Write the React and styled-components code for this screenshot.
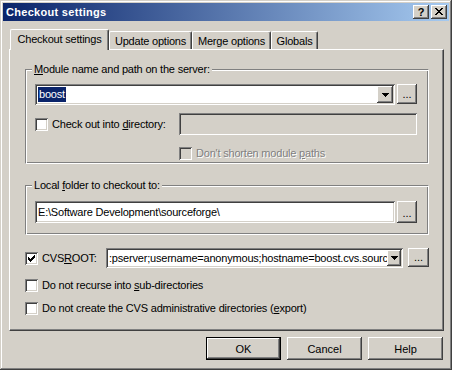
import React from "react";
import styled, { createGlobalStyle } from "styled-components";

const FACE = "#D4D0C8";
const SHADOW = "#808080";
const DARK = "#404040";
const LIGHT = "#FFFFFF";
const NAVY = "#0A246A";

const GlobalStyle = createGlobalStyle`
  html, body { margin: 0; padding: 0; background: ${FACE}; }
  body { font-family: "Liberation Sans", Arial, sans-serif; font-size: 11px; color: #000; }
  *, *::before, *::after { box-sizing: border-box; }
`;

const raisedShadow = `inset -1px -1px ${DARK}, inset 1px 1px ${LIGHT}, inset -2px -2px ${SHADOW}, inset 2px 2px ${FACE}`;
const sunkenShadow = `inset 1px 1px ${SHADOW}, inset -1px -1px ${LIGHT}, inset 2px 2px ${DARK}, inset -2px -2px ${FACE}`;

const Window = styled.div`
  width: 452px;
  height: 370px;
  padding: 3px;
  background: ${FACE};
  box-shadow: inset -1px -1px ${DARK}, inset 1px 1px ${FACE}, inset -2px -2px ${SHADOW}, inset 2px 2px ${LIGHT};
  display: flex;
  flex-direction: column;
  font-family: "Liberation Sans", Arial, sans-serif;
  font-size: 11px;
  letter-spacing: -0.2px;
  overflow: hidden;
`;

const TitleBar = styled.div`
  height: 18px;
  flex: none;
  display: flex;
  align-items: center;
  padding: 0 2px 0 3px;
  background: linear-gradient(to right, ${NAVY}, #a6caf0);
`;

const TitleText = styled.div`
  flex: 1;
  color: #fff;
  font-weight: bold;
  letter-spacing: 0.3px;
  line-height: 18px;
`;

const CaptionButtons = styled.div`
  display: flex;
  gap: 2px;
`;

const CaptionButton = styled.div`
  width: 16px;
  height: 14px;
  background: ${FACE};
  box-shadow: ${raisedShadow};
  display: flex;
  align-items: center;
  justify-content: center;
  font-weight: bold;
  font-size: 11px;
  line-height: 14px;
  letter-spacing: 0;
  color: #000;
  padding-bottom: 1px;
`;

const Body = styled.div`
  flex: 1;
  display: flex;
  flex-direction: column;
  padding: 8px 5px 0 6px;
`;

const TabStrip = styled.div`
  display: flex;
  align-items: flex-end;
  padding-left: 1px;
`;

const Tab = styled.div`
  position: relative;
  z-index: ${(p) => (p.$active ? 1 : 0)};
  width: ${(p) => p.$w}px;
  height: ${(p) => (p.$active ? 21 : 18)}px;
  margin-bottom: ${(p) => (p.$active ? -1 : 0)}px;
  background: ${FACE};
  border-top: 1px solid ${LIGHT};
  border-left: 1px solid ${LIGHT};
  border-right: 1px solid ${DARK};
  border-radius: 2px 2px 0 0;
  box-shadow: inset -1px 0 ${SHADOW};
  display: flex;
  align-items: center;
  justify-content: center;
  white-space: nowrap;
  padding-bottom: ${(p) => (p.$active ? 2 : 0)}px;
`;

const Panel = styled.div`
  height: 282px;
  flex: none;
  border-top: 1px solid ${LIGHT};
  border-left: 1px solid ${LIGHT};
  border-right: 1px solid ${DARK};
  border-bottom: 1px solid ${DARK};
  box-shadow: inset -1px -1px ${SHADOW};
  display: flex;
  flex-direction: column;
  padding: 19px 14px 0 15px;
  min-width: 0;
`;

const Group = styled.div`
  display: flex;
  flex-direction: column;
  border: 1px solid;
  border-color: ${SHADOW} ${LIGHT} ${LIGHT} ${SHADOW};
  box-shadow: inset 1px 1px ${LIGHT}, inset -1px -1px ${SHADOW};
  padding: 0 11px ${(p) => p.$pb}px 9px;
  margin-top: ${(p) => p.$mt || 0}px;
`;

const GroupLabel = styled.div`
  align-self: flex-start;
  margin: -7px 0 0 -3px;
  padding: 0 2px;
  background: ${FACE};
  line-height: 13px;
  white-space: nowrap;
`;

const Key = styled.span`
  text-decoration: underline;
  text-underline-offset: 1px;
`;

const FieldRow = styled.div`
  display: flex;
  align-items: flex-start;
  gap: 2px;
  margin-top: ${(p) => p.$mt}px;
  height: ${(p) => p.$h}px;
  min-width: 0;
`;

const Combo = styled.div`
  flex: 1;
  min-width: 0;
  height: ${(p) => p.$h}px;
  background: ${LIGHT};
  box-shadow: ${sunkenShadow};
  padding: 2px;
  display: flex;
`;

const ComboValue = styled.div`
  flex: 1;
  min-width: 0;
  display: flex;
  align-items: center;
  padding-left: 1px;
  overflow: hidden;
  white-space: nowrap;
`;

const Selection = styled.span`
  background: ${NAVY};
  color: #fff;
  line-height: 15px;
  padding: 0 1px;
`;

const DropButton = styled.div`
  width: ${(p) => p.$w}px;
  flex: none;
  background: ${FACE};
  box-shadow: ${raisedShadow};
  display: flex;
  align-items: center;
  justify-content: center;
`;

const Edit = styled.div`
  flex: 1;
  min-width: 0;
  height: ${(p) => p.$h}px;
  background: ${(p) => (p.$disabled ? FACE : LIGHT)};
  box-shadow: ${sunkenShadow};
  padding: 0 3px;
  display: flex;
  align-items: center;
  white-space: nowrap;
  overflow: hidden;
`;

const DotsButton = styled.div`
  width: ${(p) => p.$w}px;
  height: ${(p) => p.$h}px;
  flex: none;
  background: ${FACE};
  box-shadow: ${raisedShadow};
  display: flex;
  align-items: flex-end;
  justify-content: center;
  line-height: 11px;
  padding-bottom: 4px;
  letter-spacing: 0;
`;

const DirRow = styled.div`
  display: grid;
  grid-template-columns: 144px 238px;
  align-items: center;
  margin-top: 8px;
  height: 22px;
`;

const CheckRow = styled.div`
  display: flex;
  align-items: center;
  gap: 4px;
  height: 13px;
  line-height: 13px;
  margin-top: ${(p) => p.$mt || 0}px;
  margin-left: ${(p) => p.$ml || 0}px;
  width: ${(p) => (p.$w ? `${p.$w}px` : "auto")};
  flex: none;
  white-space: nowrap;
  color: ${(p) => (p.$disabled ? SHADOW : "#000")};
  text-shadow: ${(p) => (p.$disabled ? `1px 1px 0 ${LIGHT}` : "none")};
`;

const Box = styled.span`
  width: 13px;
  height: 13px;
  flex: none;
  background: ${(p) => (p.$disabled ? FACE : LIGHT)};
  box-shadow: ${sunkenShadow};
  display: block;
`;

const CvsRow = styled.div`
  display: flex;
  align-items: center;
  margin-top: 13px;
  height: 20px;
  min-width: 0;
`;

const CvsRight = styled.div`
  flex: 1;
  min-width: 0;
  display: flex;
  gap: 5px;
  align-items: flex-start;
  height: 20px;
`;

const ButtonRow = styled.div`
  display: flex;
  justify-content: flex-end;
  gap: 6px;
  margin-top: 6px;
  padding-right: 1px;
`;

const PushButton = styled.div`
  width: 75px;
  height: 23px;
  background: ${FACE};
  border: ${(p) => (p.$default ? "1px solid #000" : "none")};
  box-shadow: ${raisedShadow};
  display: flex;
  align-items: center;
  justify-content: center;
  letter-spacing: 0;
`;

const Arrow = () => (
  <svg width="7" height="4" viewBox="0 0 7 4" shapeRendering="crispEdges">
    <path d="M0 0h7v1h-7z M1 1h5v1h-5z M2 2h3v1h-3z M3 3h1v1h-1z" fill="#000" />
  </svg>
);

const CheckMark = () => (
  <svg width="13" height="13" viewBox="0 0 13 13" shapeRendering="crispEdges" style={{ display: "block" }}>
    <path
      d="M9 3h1v1h-1z M8 4h2v1h-2z M3 5h1v1h-1z M7 5h3v1h-3z M3 6h2v1h-2z M6 6h3v1h-3z M3 7h5v1h-5z M4 8h3v1h-3z M5 9h1v1h-1z"
      fill="#000"
    />
  </svg>
);

const CloseGlyph = () => (
  <svg width="8" height="7" viewBox="0 0 8 7" shapeRendering="crispEdges">
    <path
      d="M0 0h2v1h-2z M6 0h2v1h-2z M1 1h2v1h-2z M5 1h2v1h-2z M2 2h4v1h-4z M3 3h2v1h-2z M2 4h4v1h-4z M1 5h2v1h-2z M5 5h2v1h-2z M0 6h2v1h-2z M6 6h2v1h-2z"
      fill="#000"
    />
  </svg>
);

const Check = ({ checked, disabled, children, ...rest }) => (
  <CheckRow $disabled={disabled} {...rest}>
    <Box $disabled={disabled}>{checked && <CheckMark />}</Box>
    <span>{children}</span>
  </CheckRow>
);

const tabs = [
  { label: "Checkout settings", w: 99, active: true },
  { label: "Update options", w: 83 },
  { label: "Merge options", w: 79 },
  { label: "Globals", w: 47 },
];

export default function App() {
  return (
    <>
      <GlobalStyle />
      <Window>
        <TitleBar>
          <TitleText>Checkout settings</TitleText>
          <CaptionButtons>
            <CaptionButton>?</CaptionButton>
            <CaptionButton>
              <CloseGlyph />
            </CaptionButton>
          </CaptionButtons>
        </TitleBar>
        <Body>
          <TabStrip>
            {tabs.map((t) => (
              <Tab key={t.label} $w={t.w} $active={t.active}>
                {t.label}
              </Tab>
            ))}
          </TabStrip>
          <Panel>
            <Group $pb={3}>
              <GroupLabel>
                <Key>M</Key>odule name and path on the server:
              </GroupLabel>
              <FieldRow $mt={8} $h={21}>
                <Combo $h={21}>
                  <ComboValue>
                    <Selection>boost</Selection>
                  </ComboValue>
                  <DropButton $w={16}>
                    <Arrow />
                  </DropButton>
                </Combo>
                <DotsButton $w={20} $h={20}>...</DotsButton>
              </FieldRow>
              <DirRow>
                <Check>
                  Check out into <Key>d</Key>irectory:
                </Check>
                <Edit $disabled $h={22} />
              </DirRow>
              <Check disabled $mt={12} $ml={144}>
                Don't shorten module <Key>p</Key>aths
              </Check>
            </Group>
            <Group $pb={11} $mt={21}>
              <GroupLabel>
                Local <Key>f</Key>older to checkout to:
              </GroupLabel>
              <FieldRow $mt={9} $h={22}>
                <Edit $h={22}>E:\Software Development\sourceforge\</Edit>
                <DotsButton $w={20} $h={22}>...</DotsButton>
              </FieldRow>
            </Group>
            <CvsRow>
              <Check checked $w={81}>
                CVS<Key>R</Key>OOT:
              </Check>
              <CvsRight>
                <Combo $h={20}>
                  <ComboValue>
                    :pserver;username=anonymous;hostname=boost.cvs.sourceforge.net:/cvsroot/boost
                  </ComboValue>
                  <DropButton $w={14}>
                    <Arrow />
                  </DropButton>
                </Combo>
                <DotsButton $w={21} $h={19}>...</DotsButton>
              </CvsRight>
            </CvsRow>
            <Check $mt={11}>
              Do not recurse into <Key>s</Key>ub-directories
            </Check>
            <Check $mt={10}>
              Do not create the CVS administrative directories (<Key>e</Key>xport)
            </Check>
          </Panel>
          <ButtonRow>
            <PushButton $default>OK</PushButton>
            <PushButton>Cancel</PushButton>
            <PushButton>Help</PushButton>
          </ButtonRow>
        </Body>
      </Window>
    </>
  );
}
